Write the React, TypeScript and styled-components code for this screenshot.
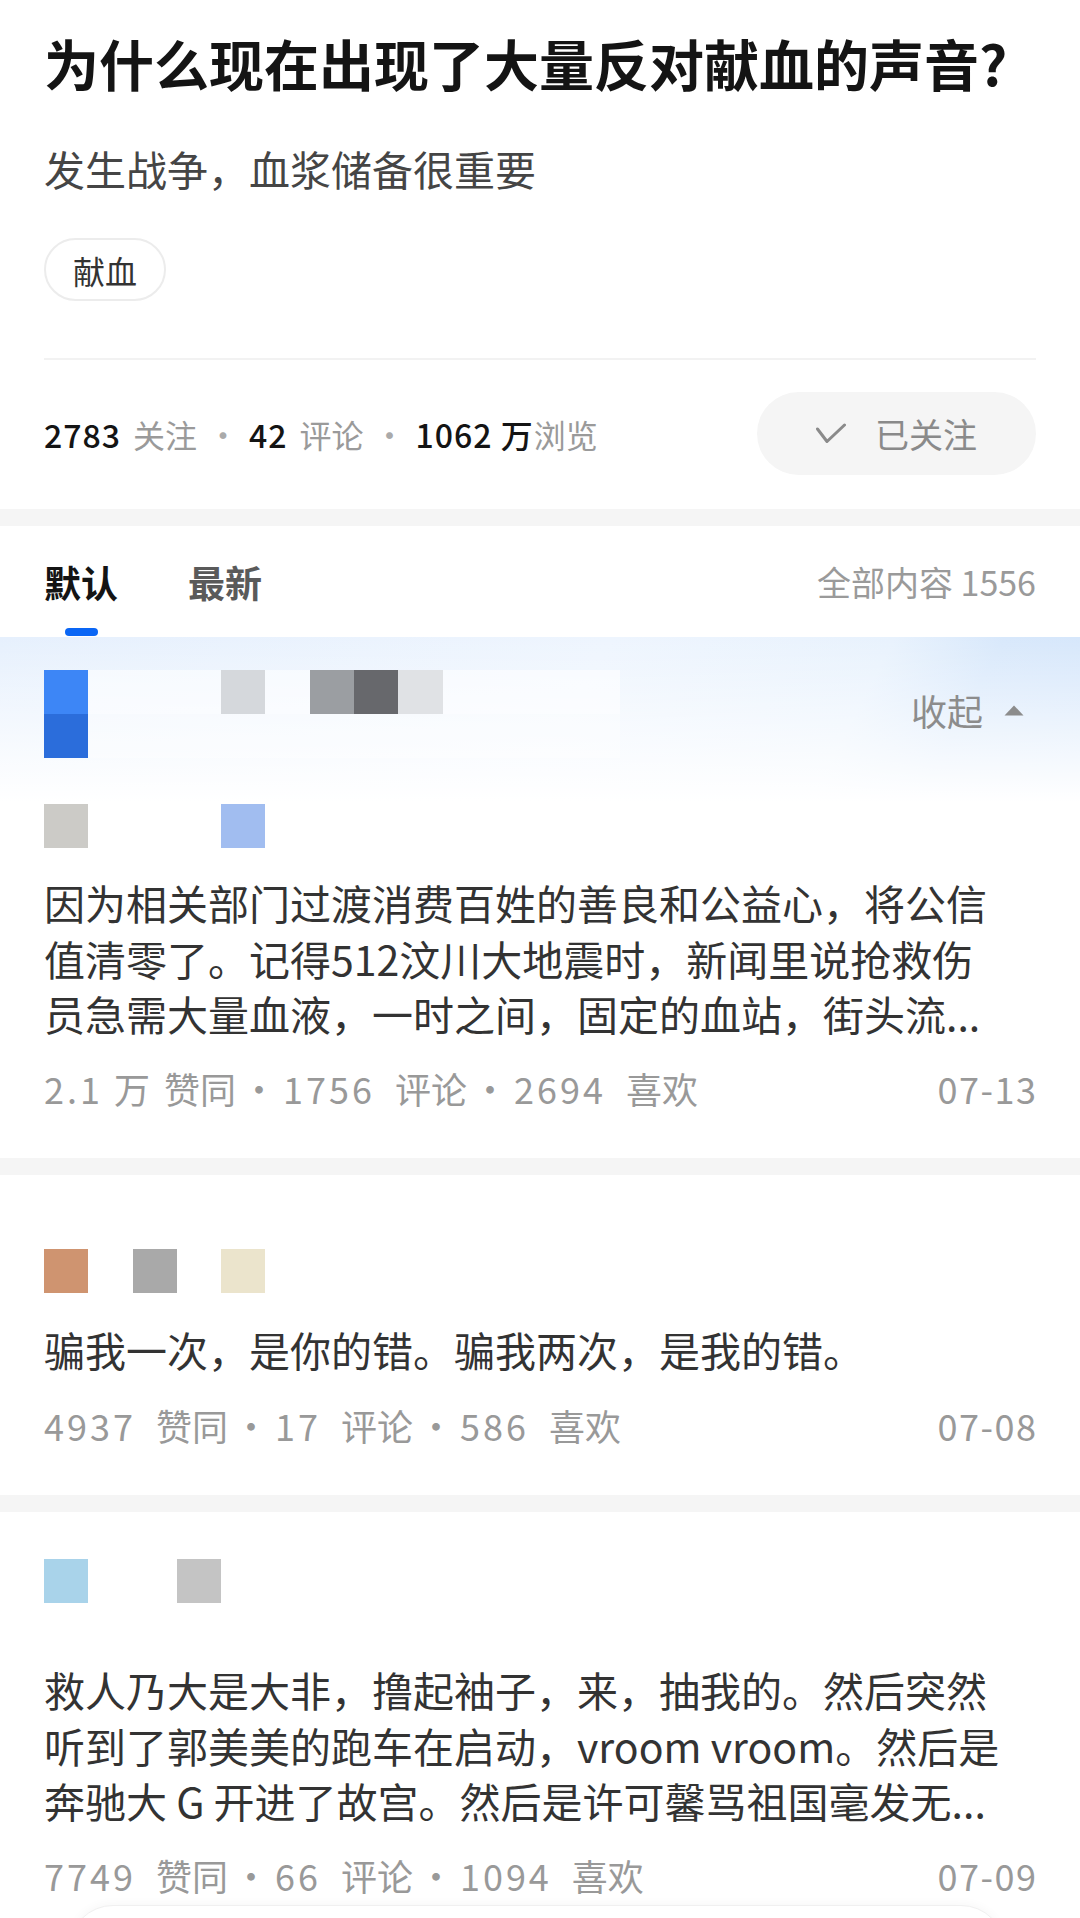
import React from "react";
import styled, { createGlobalStyle } from "styled-components";

const GlobalStyle = createGlobalStyle`
  html, body { margin: 0; padding: 0; background: #fff; }
  body {
    font-family: "Noto Sans CJK SC", "Noto Sans", sans-serif;
    -webkit-font-smoothing: antialiased;
  }
  * { box-sizing: border-box; }
`;

const Page = styled.div`
  position: relative;
  width: 1080px;
  height: 1918px;
  overflow: hidden;
  background: #fff;
  font-family: "Noto Sans CJK SC", "Noto Sans", sans-serif;
`;

/* ---------- question header ---------- */
const Header = styled.section`
  padding: 26px 44px 0;
`;

const Title = styled.h1`
  margin: 0;
  font-size: 55px;
  line-height: 72px;
  font-weight: 700;
  color: #141414;
`;

const Subtitle = styled.p`
  margin: 42px 0 0;
  font-size: 41px;
  line-height: 56px;
  color: #454545;
`;

const TagRow = styled.div`
  display: flex;
  margin-top: 42px;
`;

const Tag = styled.span`
  display: inline-flex;
  align-items: center;
  justify-content: center;
  height: 63px;
  padding: 0 27px;
  border: 2px solid #ececec;
  border-radius: 32px;
  font-size: 32px;
  color: #333;
`;

const Divider = styled.div`
  margin-top: 57px;
  border-top: 2px solid #f2f2f2;
`;

const StatsRow = styled.div`
  display: flex;
  align-items: center;
  justify-content: space-between;
  margin-top: 32px;
  padding-bottom: 34px;
`;

const Stats = styled.div`
  display: flex;
  align-items: center;
  font-size: 32px;
  line-height: 44px;
`;

const StatNum = styled.span`
  color: #141414;
  font-weight: 500;
  letter-spacing: 1px;
`;

const StatLabel = styled.span<{ $gap?: number }>`
  color: #9a9a9a;
  margin-left: ${(p) => p.$gap ?? 0}px;
`;

const Dot = styled.span<{ $l: number; $r: number }>`
  display: flex;
  justify-content: center;
  width: 10px;
  margin: 0 ${(p) => p.$r}px 0 ${(p) => p.$l}px;
`;

const StatDot = styled(Dot)`
  color: #aaa;
`;

const FollowButton = styled.button`
  display: flex;
  align-items: center;
  justify-content: center;
  gap: 29px;
  width: 279px;
  height: 83px;
  padding: 0;
  border: none;
  border-radius: 42px;
  background: #f5f5f5;
  color: #8a8a8a;
  font-family: inherit;
  font-size: 34px;
`;

const Band = styled.div`
  height: 17px;
  background: #f5f5f5;
`;

/* ---------- tabs ---------- */
const TabBar = styled.nav`
  display: flex;
  align-items: flex-start;
  justify-content: space-between;
  height: 111px;
  padding: 30px 44px 0;
`;

const TabGroup = styled.div`
  display: flex;
  gap: 70px;
`;

const Tab = styled.div<{ $active?: boolean }>`
  display: flex;
  flex-direction: column;
  align-items: center;
  font-size: 37px;
  line-height: 52px;
  font-weight: ${(p) => (p.$active ? 700 : 600)};
  color: ${(p) => (p.$active ? "#141414" : "#5a5a5a")};
`;

const Indicator = styled.span`
  width: 33px;
  height: 8px;
  margin-top: 20px;
  border-radius: 4px;
  background: #0a66f5;
`;

const TotalCount = styled.div`
  font-size: 34px;
  line-height: 52px;
  color: #9a9a9a;
`;

/* ---------- answers ---------- */
const Card = styled.article<{ $pt: number; $highlight?: boolean }>`
  padding: ${(p) => p.$pt}px 44px 45px;
  background: ${(p) =>
    p.$highlight
      ? `linear-gradient(180deg, rgba(255,255,255,0) 0px, rgba(255,255,255,0.5) 80px, #fff 165px),
         linear-gradient(118deg, #e6f0fd 0%, #eef5fe 45%, #e8f2fd 66%, #d8e8fb 74%, #d0e3fb 100%)`
      : "#fff"};
`;

const CardHead = styled.div`
  display: flex;
  align-items: flex-start;
  justify-content: space-between;
`;

const Mosaic = styled.div<{ $mt?: number }>`
  display: grid;
  grid-template-columns: repeat(13, 44.3px);
  grid-auto-rows: 44px;
  margin-top: ${(p) => p.$mt ?? 0}px;
`;

const Cell = styled.span<{ $col: number; $row?: number; $span?: number; $color: string }>`
  grid-column: ${(p) => p.$col} / span ${(p) => p.$span ?? 1};
  grid-row: ${(p) => p.$row ?? 1};
  background: ${(p) => p.$color};
`;

const Collapse = styled.div`
  display: flex;
  align-items: center;
  gap: 21px;
  margin-top: 14px;
  padding-right: 12px;
  font-size: 36px;
  line-height: 52px;
  color: #8c8c8c;
`;

const AnswerText = styled.p<{ $mt: number }>`
  margin: ${(p) => p.$mt}px 0 0;
  max-width: 962px;
  font-size: 41px;
  line-height: 55.5px;
  color: #333;
`;

const Meta = styled.div<{ $mt: number }>`
  display: flex;
  align-items: center;
  justify-content: space-between;
  margin-top: ${(p) => p.$mt}px;
  font-size: 36px;
  line-height: 50px;
  color: #999;
`;

const MetaGroup = styled.div`
  display: flex;
  align-items: center;
`;

const MetaNum = styled.span`
  letter-spacing: 3px;
`;

const MetaLabel = styled.span<{ $gap?: number }>`
  margin-left: ${(p) => p.$gap ?? 20}px;
`;

const MetaDate = styled.span`
  letter-spacing: 1.5px;
  margin-right: -1.5px;
`;

const BottomBar = styled.div`
  position: absolute;
  left: 69px;
  top: 1905px;
  width: 936px;
  height: 110px;
  border-radius: 44px;
  background: #fff;
  border: 1.5px solid #f0f0f0;
  box-shadow: 0 -2px 10px rgba(0, 0, 0, 0.03);
`;

type CellSpec = { col: number; row?: number; span?: number; color: string };

const MosaicBlock = ({ cells, mt }: { cells: CellSpec[]; mt?: number }) => (
  <Mosaic $mt={mt}>
    {cells.map((c, i) => (
      <Cell key={i} $col={c.col} $row={c.row} $span={c.span} $color={c.color} />
    ))}
  </Mosaic>
);

const Meta3 = ({
  a,
  aGap,
  b,
  c,
  date,
  mt,
}: {
  a: string;
  aGap?: number;
  b: string;
  c: string;
  date: string;
  mt: number;
}) => (
  <Meta $mt={mt}>
    <MetaGroup>
      <MetaNum>{a}</MetaNum>
      <MetaLabel $gap={aGap}>赞同</MetaLabel>
      <Dot $l={18} $r={19}>·</Dot>
      <MetaNum>{b}</MetaNum>
      <MetaLabel>评论</MetaLabel>
      <Dot $l={18} $r={19}>·</Dot>
      <MetaNum>{c}</MetaNum>
      <MetaLabel>喜欢</MetaLabel>
    </MetaGroup>
    <MetaDate>{date}</MetaDate>
  </Meta>
);

const CheckIcon = () => (
  <svg width="30" height="21" viewBox="0 0 30 21" fill="none">
    <polyline
      points="1.5,6 11,18.5 28.5,2"
      stroke="#8a8a8a"
      strokeWidth="3"
      strokeLinecap="round"
      strokeLinejoin="round"
    />
  </svg>
);

const UpTriangle = () => (
  <svg width="20" height="11" viewBox="0 0 20 11">
    <polygon points="10,0.5 19.5,10.5 0.5,10.5" fill="#8c8c8c" strokeLinejoin="round" />
  </svg>
);

export default function App() {
  const white1 = "rgba(255,255,255,0.55)";
  const white2 = "rgba(255,255,255,0.35)";
  return (
    <Page>
      <GlobalStyle />
      <Header>
        <Title>为什么现在出现了大量反对献血的声音?</Title>
        <Subtitle>发生战争，血浆储备很重要</Subtitle>
        <TagRow>
          <Tag>献血</Tag>
        </TagRow>
        <Divider />
        <StatsRow>
          <Stats>
            <StatNum>2783</StatNum>
            <StatLabel $gap={12}>关注</StatLabel>
            <StatDot $l={21} $r={21}>·</StatDot>
            <StatNum>42</StatNum>
            <StatLabel $gap={12}>评论</StatLabel>
            <StatDot $l={21} $r={21}>·</StatDot>
            <StatNum>1062 万</StatNum>
            <StatLabel>浏览</StatLabel>
          </Stats>
          <FollowButton>
            <CheckIcon />
            <span>已关注</span>
          </FollowButton>
        </StatsRow>
      </Header>
      <Band />
      <TabBar>
        <TabGroup>
          <Tab $active>
            默认
            <Indicator />
          </Tab>
          <Tab>最新</Tab>
        </TabGroup>
        <TotalCount>全部内容 1556</TotalCount>
      </TabBar>

      <Card $pt={33} $highlight>
        <CardHead>
          <MosaicBlock
            cells={[
              { col: 1, row: 1, color: "#3d86f6" },
              { col: 1, row: 2, color: "#2b6ddb" },
              { col: 2, row: 1, span: 3, color: white1 },
              { col: 5, row: 1, color: "#d5d8dc" },
              { col: 6, row: 1, color: white1 },
              { col: 7, row: 1, color: "#9b9ea2" },
              { col: 8, row: 1, color: "#67686c" },
              { col: 9, row: 1, color: "#e0e2e5" },
              { col: 10, row: 1, span: 4, color: white1 },
              { col: 2, row: 2, span: 12, color: white2 },
            ]}
          />
          <Collapse>
            收起
            <UpTriangle />
          </Collapse>
        </CardHead>
        <MosaicBlock
          mt={46}
          cells={[
            { col: 1, color: "#cccbc7" },
            { col: 5, color: "#a1bdf0" },
          ]}
        />
        <AnswerText $mt={27}>
          因为相关部门过渡消费百姓的善良和公益心，将公信值清零了。记得512汶川大地震时，新闻里说抢救伤员急需大量血液，一时之间，固定的血站，街头流...
        </AnswerText>
        <Meta3 a="2.1 万" aGap={11} b="1756" c="2694" date="07-13" mt={21} />
      </Card>
      <Band />

      <Card $pt={74}>
        <MosaicBlock
          cells={[
            { col: 1, color: "#cf9470" },
            { col: 3, color: "#a9a9a9" },
            { col: 5, color: "#ebe4cc" },
          ]}
        />
        <AnswerText $mt={29}>骗我一次，是你的错。骗我两次，是我的错。</AnswerText>
        <Meta3 a="4937" b="17" c="586" date="07-08" mt={23} />
      </Card>
      <Band />

      <Card $pt={47}>
        <MosaicBlock
          cells={[
            { col: 1, color: "#a9d3ea" },
            { col: 4, color: "#c4c4c4" },
          ]}
        />
        <AnswerText $mt={59}>
          救人乃大是大非，撸起袖子，来，抽我的。然后突然听到了郭美美的跑车在启动，vroom vroom。然后是奔驰大 G 开进了故宫。然后是许可馨骂祖国毫发无...
        </AnswerText>
        <Meta3 a="7749" b="66" c="1094" date="07-09" mt={21} />
      </Card>

      <BottomBar />
    </Page>
  );
}
